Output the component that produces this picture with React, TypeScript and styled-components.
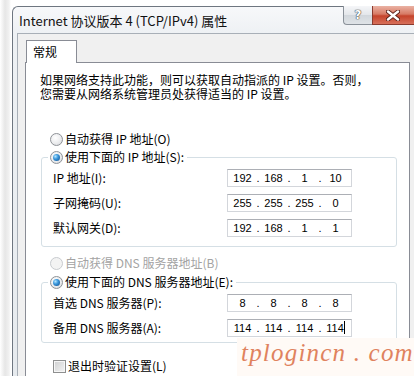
import React from 'react';
import styled, { createGlobalStyle } from 'styled-components';

const GlobalStyle = createGlobalStyle`
  html, body { margin: 0; padding: 0; background: #fff; }
  body { overflow: hidden; }
  #root { width: 414px; height: 376px; }
`;

const CJK = `"Noto Sans CJK SC", "Noto Sans", sans-serif`;

const Screen = styled.div`
  position: relative;
  width: 414px;
  height: 376px;
  overflow: hidden;
  box-sizing: border-box;
  padding: 6px 0 0 12px;
  background: linear-gradient(to right, #fff 0, #e6e6e6 5px, #f1f1f1 9px, #fff 11px);
  font-family: ${CJK};
  color: #000;
`;

const Window = styled.div`
  width: 412px;
  height: 400px;
  box-sizing: border-box;
  border: 1px solid #6e7680;
  border-right: none;
  border-bottom: none;
  border-top-left-radius: 6px;
  background: linear-gradient(#f7f8fa, #eef1f4 26px, #e6eaee);
  display: flex;
  flex-direction: column;
`;

const TitleBar = styled.div`
  height: 26px;
  display: flex;
  align-items: flex-start;
  flex: none;
`;

const Title = styled.div`
  padding: 5px 0 0 6px;
  font-size: 13px;
  line-height: 17px;
  color: #111;
`;

const CaptionButtons = styled.div`
  margin-left: auto;
  margin-top: -1px;
  display: flex;
`;

const HelpButton = styled.div`
  width: 29px;
  height: 19px;
  box-sizing: border-box;
  border: 1px solid #8a9199;
  border-top: none;
  border-right: none;
  border-bottom-left-radius: 4px;
  background: linear-gradient(#f5f6f8, #e3e6ea 50%, #d2d7dc 52%, #dfe3e7);
  display: flex;
  align-items: center;
  justify-content: center;
  font-family: "DejaVu Sans", sans-serif;
  font-weight: bold;
  font-size: 12px;
  color: #fff;
  text-shadow: 0 0 1px #444, 0 0 1px #444, 0 0 1px #444;
`;

const CloseButton = styled.div`
  width: 52px;
  height: 19px;
  box-sizing: border-box;
  border: 1px solid #8a3b2e;
  border-top: none;
  background: linear-gradient(#eab2a4, #d77a64 45%, #c5432b 55%, #d7705a);
  display: flex;
  align-items: center;
  padding-left: 13px;
`;

const Client = styled.div`
  flex: 1;
  margin-left: 4px;
  border-left: 1px solid #a8afb7;
  border-top: 1px solid #a8afb7;
  background: #f0f0f0;
  box-sizing: border-box;
  padding: 6px 0 0 7px;
  display: flex;
  flex-direction: column;
`;

const TabStrip = styled.div`
  display: flex;
  padding-left: 1px;
`;

const Tab = styled.div`
  position: relative;
  z-index: 1;
  width: 51px;
  height: 23px;
  box-sizing: border-box;
  border: 1px solid #898c95;
  border-bottom: none;
  background: #fff;
  margin-bottom: -1px;
  padding-left: 6px;
  font-size: 12px;
  line-height: 21px;
`;

const Panel = styled.div`
  width: 385px;
  flex: 1;
  box-sizing: border-box;
  border: 1px solid #898c95;
  background: #fff;
  padding: 10px 0 0 15px;
  display: flex;
  flex-direction: column;
  align-items: flex-start;
`;

const Intro = styled.p`
  margin: 0 0 0 -1px;
  font-size: 12px;
  line-height: 14px;
`;

const OptionRow = styled.div<{ $top?: number; $indent?: number }>`
  display: flex;
  align-items: center;
  height: 16px;
  margin-top: ${p => p.$top ?? 0}px;
  padding-left: ${p => p.$indent ?? 9}px;
  gap: 2px;
`;

const OptionText = styled.span<{ $disabled?: boolean }>`
  font-size: 12px;
  line-height: 16px;
  color: ${p => (p.$disabled ? '#a3a3a3' : '#000')};
  white-space: pre;
`;

const RadioCircle = styled.span<{ $checked?: boolean; $disabled?: boolean }>`
  flex: none;
  width: 13px;
  height: 13px;
  box-sizing: border-box;
  border-radius: 50%;
  border: 1px solid ${p => (p.$disabled ? '#c8cbcf' : '#8e9297')};
  background: ${p =>
    p.$disabled
      ? '#f3f3f3'
      : 'radial-gradient(circle at 40% 35%, #ffffff 0, #ebecee 55%, #d3d5d8 100%)'};
  display: flex;
  align-items: center;
  justify-content: center;
  &::after {
    content: '';
    display: ${p => (p.$checked ? 'block' : 'none')};
    width: 7px;
    height: 7px;
    border-radius: 50%;
    background: radial-gradient(circle at 35% 35%, #b4e6ff 0, #3a97dc 40%, #0d4886 100%);
  }
`;

const CheckBox = styled.span`
  flex: none;
  width: 13px;
  height: 13px;
  box-sizing: border-box;
  border: 1px solid #8e8f8f;
  background: linear-gradient(135deg, #cfd0d1, #f3f3f3);
  box-shadow: inset 0 0 0 1px #f6f6f6;
`;

const Group = styled.div<{ $top: number; $bottom: number }>`
  margin-top: ${p => p.$top}px;
  width: 356px;
  box-sizing: border-box;
  border: 1px solid #d5dfe5;
  border-radius: 3px;
  padding: 0 0 ${p => p.$bottom}px 11px;
  display: flex;
  flex-direction: column;
`;

const Legend = styled.div`
  align-self: flex-start;
  display: flex;
  align-items: center;
  height: 16px;
  gap: 2px;
  margin: -9px 0 0 -5px;
  padding: 0 3px 0 2px;
  background: #fff;
`;

const FieldRow = styled.div`
  display: flex;
  align-items: center;
  height: 25px;
`;

const FieldLabel = styled.span`
  width: 174px;
  font-size: 12px;
  white-space: pre;
`;

const IpBox = styled.div`
  width: 125px;
  height: 18px;
  box-sizing: border-box;
  border: 1px solid #d3d6db;
  border-top-color: #acafb5;
  padding: 0 2px;
  display: flex;
  align-items: center;
  font-family: "Liberation Sans", Arial, sans-serif;
  font-size: 11px;
`;

const IpPart = styled.span`
  width: 25px;
  text-align: center;
  display: flex;
  justify-content: center;
  align-items: center;
`;

const IpDot = styled.span`
  width: 6px;
  text-align: center;
`;

const Caret = styled.span`
  display: inline-block;
  width: 1px;
  height: 13px;
  background: #000;
`;

const Watermark = styled.div`
  position: absolute;
  left: 237px;
  top: 338px;
  width: 177px;
  height: 38px;
  background: #fffaf6;
  font-family: "Liberation Serif", "DejaVu Serif", serif;
  font-style: italic;
  font-size: 25px;
  line-height: 30px;
  letter-spacing: 1.2px;
  color: #e0825e;
  padding-left: 4px;
  box-sizing: border-box;
  white-space: pre;
`;

const CloseGlyph = () => (
  <svg width="14" height="11" viewBox="0 0 14 11">
    <path d="M2 1.5 L12 9.5 M12 1.5 L2 9.5" stroke="#5a2018" strokeWidth="4.2" strokeLinecap="round" />
    <path d="M2 1.5 L12 9.5 M12 1.5 L2 9.5" stroke="#ffffff" strokeWidth="2.4" strokeLinecap="round" />
  </svg>
);

const IpField = ({ parts, caret }: { parts: string[]; caret?: boolean }) => (
  <IpBox>
    {parts.map((p, i) => (
      <React.Fragment key={i}>
        {i > 0 && <IpDot>.</IpDot>}
        <IpPart>
          {p}
          {caret && i === parts.length - 1 && <Caret />}
        </IpPart>
      </React.Fragment>
    ))}
  </IpBox>
);

export default function App() {
  return (
    <>
      <GlobalStyle />
      <Screen>
        <Window>
          <TitleBar>
            <Title>Internet 协议版本 4 (TCP/IPv4) 属性</Title>
            <CaptionButtons>
              <HelpButton>?</HelpButton>
              <CloseButton>
                <CloseGlyph />
              </CloseButton>
            </CaptionButtons>
          </TitleBar>
          <Client>
            <TabStrip>
              <Tab>常规</Tab>
            </TabStrip>
            <Panel>
              <Intro>
                如果网络支持此功能，则可以获取自动指派的 IP 设置。否则，
                <br />
                您需要从网络系统管理员处获得适当的 IP 设置。
              </Intro>

              <OptionRow $top={30}>
                <RadioCircle />
                <OptionText>自动获得 IP 地址(O)</OptionText>
              </OptionRow>
              <Group $top={10} $bottom={6}>
                <Legend>
                  <RadioCircle $checked />
                  <OptionText>使用下面的 IP 地址(S):</OptionText>
                </Legend>
                <FieldRow>
                  <FieldLabel>IP 地址(I):</FieldLabel>
                  <IpField parts={['192', '168', '1', '10']} />
                </FieldRow>
                <FieldRow>
                  <FieldLabel>子网掩码(U):</FieldLabel>
                  <IpField parts={['255', '255', '255', '0']} />
                </FieldRow>
                <FieldRow>
                  <FieldLabel>默认网关(D):</FieldLabel>
                  <IpField parts={['192', '168', '1', '1']} />
                </FieldRow>
              </Group>

              <OptionRow $top={8}>
                <RadioCircle $disabled />
                <OptionText $disabled>自动获得 DNS 服务器地址(B)</OptionText>
              </OptionRow>
              <Group $top={11} $bottom={2}>
                <Legend>
                  <RadioCircle $checked />
                  <OptionText>使用下面的 DNS 服务器地址(E):</OptionText>
                </Legend>
                <FieldRow>
                  <FieldLabel>首选 DNS 服务器(P):</FieldLabel>
                  <IpField parts={['8', '8', '8', '8']} />
                </FieldRow>
                <FieldRow>
                  <FieldLabel>备用 DNS 服务器(A):</FieldLabel>
                  <IpField parts={['114', '114', '114', '114']} caret />
                </FieldRow>
              </Group>

              <OptionRow $top={15} $indent={12}>
                <CheckBox />
                <OptionText>退出时验证设置(L)</OptionText>
              </OptionRow>
            </Panel>
          </Client>
        </Window>
        <Watermark>tplogincn . com</Watermark>
      </Screen>
    </>
  );
}
